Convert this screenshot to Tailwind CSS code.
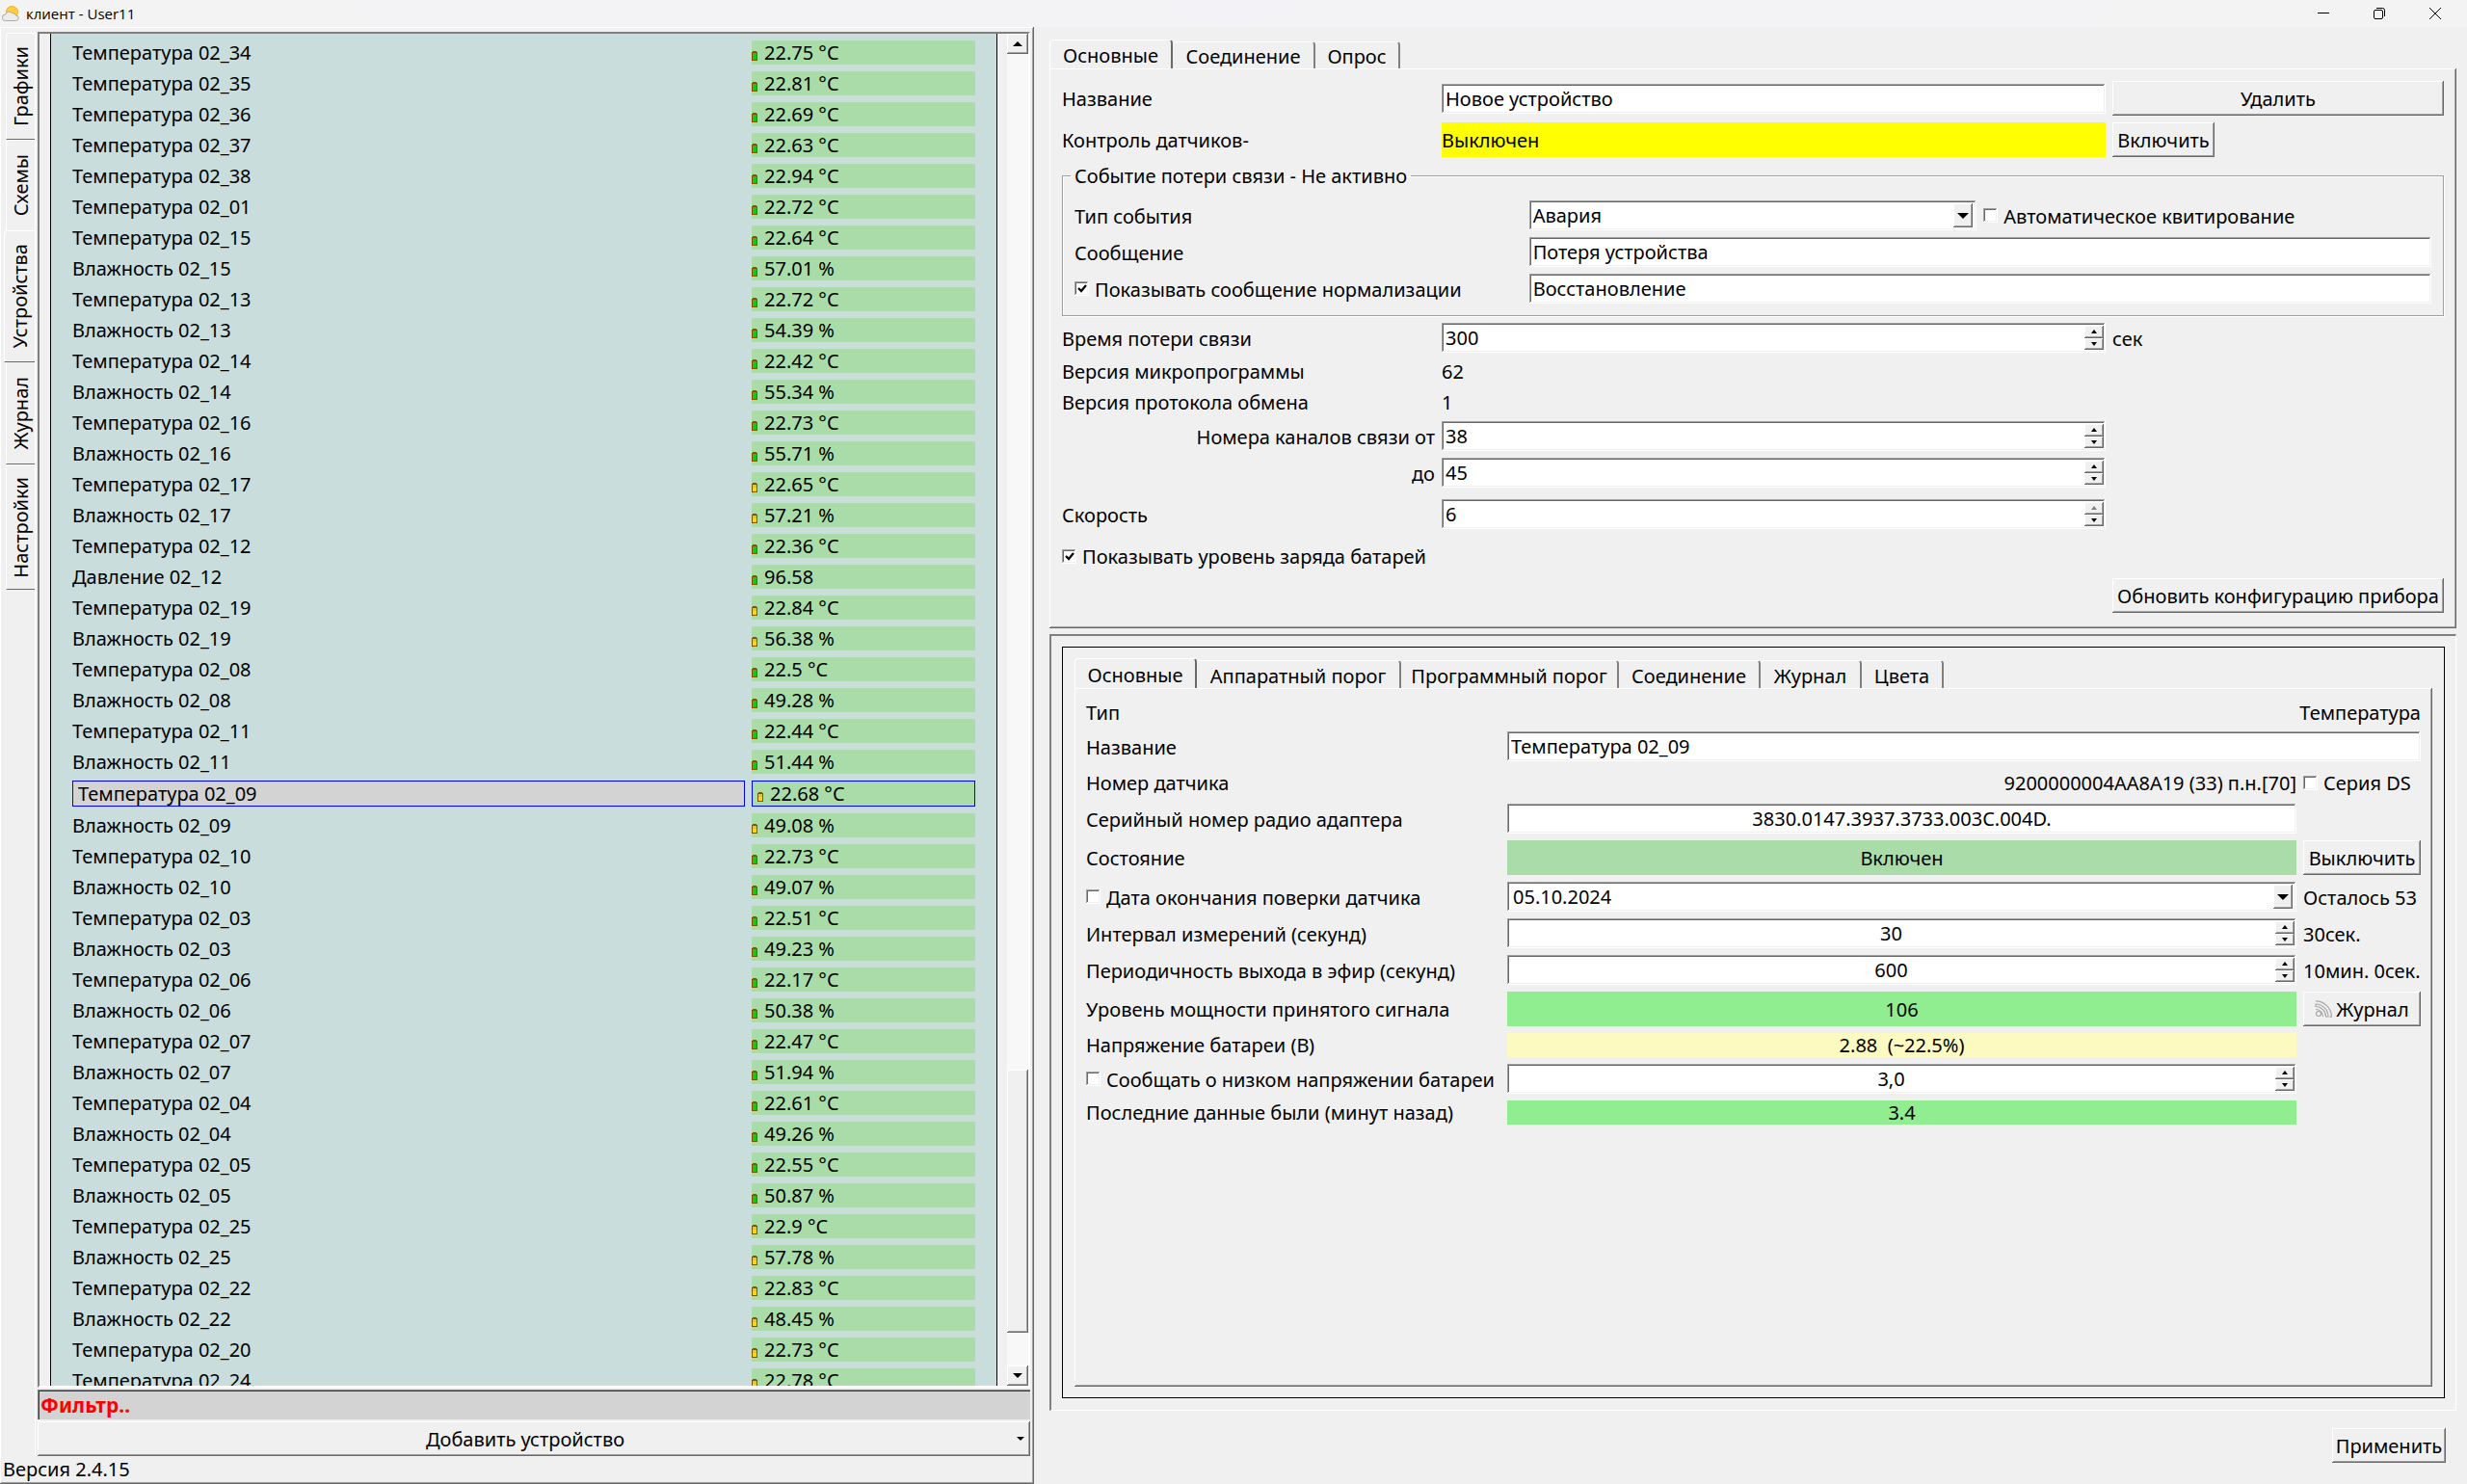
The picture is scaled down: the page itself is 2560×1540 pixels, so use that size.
<!DOCTYPE html>
<html lang="ru">
<head>
<meta charset="utf-8">
<title>клиент - User11</title>
<script src="https://cdn.jsdelivr.net/npm/@tailwindcss/browser@4"></script>
</head>
<body class="flex h-screen flex-col overflow-hidden bg-[#f0f0f0] font-['Noto_Sans','Open_Sans',sans-serif] text-[20px] leading-[25px] text-black [&_.raised]:shadow-[inset_-1px_-1px_0_#696969,inset_1px_1px_0_#fff,inset_-2px_-2px_0_#a0a0a0] [&_.sunken]:bg-white [&_.sunken]:shadow-[inset_-1px_-1px_0_#fff,inset_1px_1px_0_#a0a0a0,inset_-2px_-2px_0_#f0f0f0,inset_2px_2px_0_#696969]">
<svg class="hidden">
  <symbol id="up" viewBox="0 0 10 10"><path d="M5 3L8 7H2z"/></symbol>
  <symbol id="down" viewBox="0 0 10 10"><path d="M2 3H8L5 7z"/></symbol>
  <symbol id="drop" viewBox="0 0 12 12"><path d="M0 3H12L6 9z"/></symbol>
  <symbol id="scrollup" viewBox="0 0 10 6"><path d="M5 0L10 5H0z"/></symbol>
  <symbol id="scrolldown" viewBox="0 0 10 6"><path d="M0 0H10L5 5z"/></symbol>
  <symbol id="tick" viewBox="0 0 15 15"><path d="M4 7l3 3 5-6" fill="none" stroke="#000" stroke-width="2.200"/></symbol>
</svg>

<header class="flex h-7 shrink-0 items-center bg-[#f3f3f3] bg-linear-to-r from-[#f3f3f3] via-[#f3f2f6] to-[#f3f3f3]">
  <svg class="ml-[2px] size-[18px]" viewBox="0 0 18 18">
    <circle cx="10.500" cy="7.500" r="6" fill="#ffd23c" stroke="#f0a62c"/>
    <path d="M3.500 16.500a3.200 3.200 0 0 1 0-6.400 4.200 4.200 0 0 1 7-1.600 3.600 3.600 0 0 1 4 2.600 2.700 2.700 0 0 1 0 5.400z" fill="#ececec" stroke="#a9a29c" stroke-width=".9"/>
  </svg>
  <h1 class="ml-[7px] flex-1 font-['Open_Sans','Noto_Sans',sans-serif] text-[15px] leading-5">клиент - User11</h1>
  <button class="flex h-full w-[58px] items-center justify-center" aria-label="Свернуть"><svg class="size-3" viewBox="0 0 12 12" stroke="#000"><path d="M0 5.500H12"/></svg></button>
  <button class="flex h-full w-[58px] items-center justify-center" aria-label="Восстановить"><svg class="size-3" viewBox="0 0 12 12" fill="none" stroke="#000"><rect x=".5" y="2.500" width="9" height="9" rx="1.500"/><path d="M3 .5H9.500a2 2 0 0 1 2 2V9"/></svg></button>
  <button class="mr-1 flex h-full w-[58px] items-center justify-center" aria-label="Закрыть"><svg class="size-3" viewBox="0 0 12 12" stroke="#000"><path d="M0 0L12 12M12 0L0 12"/></svg></button>
</header>

<main class="grid min-h-0 flex-1 grid-cols-[1073fr_1487fr]">
  <section class="raised flex min-h-0 flex-col pt-[5px] pr-1 pb-[2px]">
    <div class="flex min-h-0 flex-1">
      <nav class="flex w-[37px] shrink-0 flex-col items-end border-r border-white pl-1 pt-px">
        <button class="flex h-[111px] w-[30px] items-center justify-center rounded-tl-sm border-b border-l border-t border-b-[#696969] border-l-white border-t-white"><span class="rotate-180 [writing-mode:vertical-rl]">Графики</span></button>
        <button class="flex h-[94px] w-[30px] items-center justify-center rounded-tl-sm border-l border-t border-white"><span class="rotate-180 [writing-mode:vertical-rl]">Схемы</span></button>
        <button class="flex h-[137px] w-8 items-center justify-center rounded-tl-sm border-b border-l border-t border-b-[#696969] border-l-white border-t-white"><span class="rotate-180 [writing-mode:vertical-rl]">Устройства</span></button>
        <button class="flex h-[106px] w-[30px] items-center justify-center border-b border-l border-b-[#696969] border-l-white"><span class="rotate-180 [writing-mode:vertical-rl]">Журнал</span></button>
        <button class="flex h-[130px] w-[30px] items-center justify-center rounded-tl-sm border-b border-l border-t border-b-[#696969] border-l-white border-t-white"><span class="rotate-180 [writing-mode:vertical-rl]">Настройки</span></button>
      </nav>

      <div class="flex min-h-0 min-w-0 flex-1 flex-col pl-[2px]">
        <div class="flex min-h-0 flex-1 border-2 border-b-[#fff] border-l-[#808080] border-r-[#fff] border-t-[#808080] pl-[11px]">
          <div class="min-w-0 flex-1 overflow-hidden border-x border-black bg-[#c9dddc] px-[15px]">
            <table class="w-full table-fixed border-separate border-spacing-[7px]">
              <colgroup><col><col class="w-[232px]"></colgroup>
              <tbody id="sensors"></tbody>
            </table>
          </div>
          <div class="ml-[10px] flex w-[22px] shrink-0 flex-col bg-[#f8f8f8]" role="scrollbar" aria-label="Прокрутка списка" aria-controls="sensors" aria-valuenow="90">
            <button class="raised flex h-[21px] items-center justify-center bg-[#f0f0f0]" aria-label="Вверх"><svg class="h-[6px] w-[10px]"><use href="#scrollup"/></svg></button>
            <div class="flex-[1054]"></div>
            <div class="raised flex-[273] bg-[#f0f0f0]"></div>
            <div class="flex-[34]"></div>
            <button class="raised flex h-[21px] items-center justify-center bg-[#f0f0f0]" aria-label="Вниз"><svg class="h-[6px] w-[10px]"><use href="#scrolldown"/></svg></button>
          </div>
        </div>
        <input type="text" placeholder="Фильтр.." aria-label="Фильтр" class="mt-[2px] h-[31px] w-full bg-[#d3d3d3] px-[3px] text-[21px] font-bold shadow-[inset_1px_1px_0_#808080,inset_2px_2px_0_#404040] outline-none placeholder:text-[#ff0000]">
        <button class="raised mt-[2px] flex h-9 items-center pr-[6px] pt-px"><span class="flex-1 pr-1">Добавить устройство</span><svg class="h-[5px] w-2" viewBox="0 0 10 6"><use href="#scrolldown"/></svg></button>
      </div>
    </div>
    <p class="h-[27px] pl-[3px] leading-[28px]">Версия 2.4.15</p>
  </section>

  <section class="flex min-h-0 flex-col pb-[22px] pl-4 pr-[11px] pt-[13px]">
    <div class="flex items-end" role="tablist">
      <button role="tab" aria-selected="true" class="flex h-[30px] w-[128px] items-center justify-center rounded-t-sm border-l border-r-2 border-t border-l-white border-r-[#696969] border-t-white pt-0.5">Основные</button>
      <button role="tab" class="flex h-7 w-[148px] items-center justify-center rounded-t-sm border-r-2 border-t border-r-[#808080] border-t-white pt-0.5">Соединение</button>
      <button role="tab" class="flex h-7 w-[88px] items-center justify-center rounded-t-sm border-r-2 border-t border-r-[#808080] border-t-white pt-0.5">Опрос</button>
    </div>
    <div class="raised px-[13px] pb-4 pt-[13px]">
      <div class="grid grid-cols-[387px_1fr_344px] items-center gap-[7px]">
        <label for="dev-name" class="pt-px">Название</label>
        <input id="dev-name" type="text" value="Новое устройство" class="sunken h-[31px] w-full px-1">
        <button class="raised h-9 pt-px">Удалить</button>

        <span class="pt-px">Контроль датчиков-</span>
        <output class="flex h-9 items-center bg-[#ff0] pt-px">Выключен</output>
        <button class="raised h-9 w-[106px] pt-px">Включить</button>

        <fieldset class="col-span-3 grid grid-cols-3 items-center gap-[7px] border border-[#a0a0a0] px-3 pb-3 pt-[13px] shadow-[1px_1px_0_#fff,inset_1px_1px_0_#fff]">
          <legend class="ml-[-4px] px-1">Событие потери связи - Не активно</legend>
          <label for="event-type" class="pt-px">Тип события</label>
          <div class="sunken flex h-[31px] items-center pr-1">
            <select id="event-type" class="h-full min-w-0 flex-1 appearance-none px-1"><option>Авария</option></select>
            <span class="raised flex h-[25px] w-5 items-center justify-center bg-[#f0f0f0]"><svg class="size-3"><use href="#drop"/></svg></span>
          </div>
          <label class="flex items-center gap-[6px]"><input type="checkbox" class="sunken size-[15px] appearance-none"><span class="pt-px">Автоматическое квитирование</span></label>
          <label for="loss-msg" class="pt-px">Сообщение</label>
          <input id="loss-msg" type="text" value="Потеря устройства" class="sunken col-span-2 h-[31px] w-full px-1">
          <label class="flex items-center gap-[6px]"><span class="grid"><input type="checkbox" checked class="sunken peer col-start-1 row-start-1 size-[15px] appearance-none"><svg class="pointer-events-none invisible col-start-1 row-start-1 size-[15px] peer-checked:visible"><use href="#tick"/></svg></span><span class="pt-px">Показывать сообщение нормализации</span></label>
          <input type="text" aria-label="Сообщение нормализации" value="Восстановление" class="sunken col-span-2 h-[31px] w-full px-1">
        </fieldset>

        <label for="loss-time" class="pt-px">Время потери связи</label>
        <div class="sunken flex h-[31px] pr-[2px]"><input id="loss-time" type="text" value="300" class="min-w-0 flex-1 px-1"><span class="my-[3px] flex w-5 flex-col"><button class="raised flex flex-1 items-center justify-center bg-[#f0f0f0]" aria-label="Больше"><svg class="size-[10px]"><use href="#up"/></svg></button><button class="raised flex flex-1 items-center justify-center bg-[#f0f0f0]" aria-label="Меньше"><svg class="size-[10px]"><use href="#down"/></svg></button></span></div>
        <span class="pt-px">сек</span>

        <span>Версия микропрограммы</span><span class="col-span-2">62</span>
        <span>Версия протокола обмена</span><span class="col-span-2">1</span>

        <label for="ch-from" class="pt-px text-right">Номера каналов связи от</label>
        <div class="sunken flex h-[31px] pr-[2px]"><input id="ch-from" type="text" value="38" class="min-w-0 flex-1 px-1"><span class="my-[3px] flex w-5 flex-col"><button class="raised flex flex-1 items-center justify-center bg-[#f0f0f0]" aria-label="Больше"><svg class="size-[10px]"><use href="#up"/></svg></button><button class="raised flex flex-1 items-center justify-center bg-[#f0f0f0]" aria-label="Меньше"><svg class="size-[10px]"><use href="#down"/></svg></button></span></div>
        <span></span>

        <label for="ch-to" class="pt-px text-right">до</label>
        <div class="sunken flex h-[31px] pr-[2px]"><input id="ch-to" type="text" value="45" class="min-w-0 flex-1 px-1"><span class="my-[3px] flex w-5 flex-col"><button class="raised flex flex-1 items-center justify-center bg-[#f0f0f0]" aria-label="Больше"><svg class="size-[10px]"><use href="#up"/></svg></button><button class="raised flex flex-1 items-center justify-center bg-[#f0f0f0]" aria-label="Меньше"><svg class="size-[10px]"><use href="#down"/></svg></button></span></div>
        <span></span>

        <label for="speed" class="pt-px">Скорость</label>
        <div class="sunken my-[5px] flex h-[31px] pr-[2px]"><input id="speed" type="text" value="6" class="min-w-0 flex-1 px-1"><span class="my-[3px] flex w-5 flex-col"><button class="raised flex flex-1 items-center justify-center bg-[#f0f0f0]" aria-label="Больше" disabled><svg class="size-[10px] fill-[#808080]"><use href="#up"/></svg></button><button class="raised flex flex-1 items-center justify-center bg-[#f0f0f0]" aria-label="Меньше"><svg class="size-[10px]"><use href="#down"/></svg></button></span></div>
        <span></span>

        <label class="col-span-3 flex h-8 items-center gap-[6px]"><span class="grid"><input type="checkbox" checked class="sunken peer col-start-1 row-start-1 size-[15px] appearance-none"><svg class="pointer-events-none invisible col-start-1 row-start-1 size-[15px] peer-checked:visible"><use href="#tick"/></svg></span><span class="pt-px">Показывать уровень заряда батарей</span></label>

        <button class="raised col-start-3 h-9 pt-px">Обновить конфигурацию прибора</button>
      </div>
    </div>

    <div class="mt-[6px] flex min-h-0 flex-1 flex-col border-l-2 border-t-2 border-l-[#808080] border-t-[#808080] border-b border-r border-b-white border-r-white px-[11px] pb-3 pt-[11px]">
      <div class="flex flex-1 flex-col border border-black px-3 pb-[11px] pt-[11px]">
        <div class="flex items-end" role="tablist">
          <button role="tab" aria-selected="true" class="flex h-[31px] w-[127px] items-center justify-center rounded-t-sm border-l border-r-2 border-t border-l-white border-r-[#696969] border-t-white pt-0.5">Основные</button>
          <button role="tab" class="flex h-[29px] w-[212px] items-center justify-center rounded-t-sm border-r-2 border-t border-r-[#808080] border-t-white pt-0.5">Аппаратный порог</button>
          <button role="tab" class="flex h-[29px] w-[226px] items-center justify-center rounded-t-sm border-r-2 border-t border-r-[#808080] border-t-white pt-0.5">Программный порог</button>
          <button role="tab" class="flex h-[29px] w-[147px] items-center justify-center rounded-t-sm border-r-2 border-t border-r-[#808080] border-t-white pt-0.5">Соединение</button>
          <button role="tab" class="flex h-[29px] w-[105px] items-center justify-center rounded-t-sm border-r-2 border-t border-r-[#808080] border-t-white pt-0.5">Журнал</button>
          <button role="tab" class="flex h-[29px] w-[85px] items-center justify-center rounded-t-sm border-r-2 border-t border-r-[#808080] border-t-white pt-0.5">Цвета</button>
        </div>
        <div class="raised flex-1 px-3 pt-[13px]">
          <div class="grid grid-cols-[430px_1fr_122px] items-center gap-[7px]">
            <span>Тип</span><output class="col-span-2 text-right">Температура</output>

            <label for="sen-name" class="pt-px">Название</label>
            <input id="sen-name" type="text" value="Температура 02_09" class="sunken col-span-2 h-[31px] w-full px-1">

            <span class="pt-px">Номер датчика</span>
            <output class="text-right">9200000004AA8A19 (33) п.н.[70]</output>
            <label class="flex h-[30px] items-center gap-[6px]"><input type="checkbox" class="sunken size-[15px] appearance-none"><span class="pt-px">Серия DS</span></label>

            <label for="serial" class="pt-px">Серийный номер радио адаптера</label>
            <input id="serial" type="text" value="3830.0147.3937.3733.003C.004D." class="sunken h-[31px] w-full px-1 text-center">
            <span></span>

            <span class="pt-px">Состояние</span>
            <output class="flex h-9 items-center justify-center bg-[#aadcaa] pt-px">Включен</output>
            <button class="raised h-9 pt-px">Выключить</button>

            <label class="flex items-center gap-[6px]"><input type="checkbox" class="sunken size-[15px] appearance-none"><span class="pt-px">Дата окончания поверки датчика</span></label>
            <div class="sunken flex h-[31px] items-center pr-1"><select aria-label="Дата окончания поверки" class="h-full min-w-0 flex-1 appearance-none px-[6px]"><option>05.10.2024</option></select><span class="raised flex h-[25px] w-5 items-center justify-center bg-[#f0f0f0]"><svg class="size-3"><use href="#drop"/></svg></span></div>
            <span class="pt-px">Осталось 53</span>

            <label for="interval" class="pt-px">Интервал измерений (секунд)</label>
            <div class="sunken flex h-[31px] pr-[2px]"><input id="interval" type="text" value="30" class="min-w-0 flex-1 px-1 text-center"><span class="my-[3px] flex w-5 flex-col"><button class="raised flex flex-1 items-center justify-center bg-[#f0f0f0]" aria-label="Больше"><svg class="size-[10px]"><use href="#up"/></svg></button><button class="raised flex flex-1 items-center justify-center bg-[#f0f0f0]" aria-label="Меньше"><svg class="size-[10px]"><use href="#down"/></svg></button></span></div>
            <span class="pt-px">30сек.</span>

            <label for="period" class="pt-px">Периодичность выхода в эфир (секунд)</label>
            <div class="sunken flex h-[31px] pr-[2px]"><input id="period" type="text" value="600" class="min-w-0 flex-1 px-1 text-center"><span class="my-[3px] flex w-5 flex-col"><button class="raised flex flex-1 items-center justify-center bg-[#f0f0f0]" aria-label="Больше"><svg class="size-[10px]"><use href="#up"/></svg></button><button class="raised flex flex-1 items-center justify-center bg-[#f0f0f0]" aria-label="Меньше"><svg class="size-[10px]"><use href="#down"/></svg></button></span></div>
            <span class="whitespace-nowrap pt-px">10мин. 0сек.</span>

            <span class="pt-px">Уровень мощности принятого сигнала</span>
            <output class="flex h-9 items-center justify-center bg-[#90ee90] pt-px">106</output>
            <button class="raised flex h-9 items-center justify-center gap-1"><svg class="size-[18px]" viewBox="0 0 18 18" fill="none" stroke="#a8a8a8" stroke-width="1.200"><circle cx="4" cy="14" r="2.500"/><path d="M1 6.500a10.500 10.500 0 0 1 10.500 10.500h2.500A13 13 0 0 0 1 4z"/><path d="M1 .8A16.500 16.500 0 0 1 17.400 17.200h-2"/><path d="M1 9.500a7.500 7.500 0 0 1 7.500 7.500"/></svg><span class="pt-px">Журнал</span></button>

            <span>Напряжение батареи (В)</span>
            <output class="whitespace-pre bg-[#fcfac0] text-center">2.88  (~22.5%)</output>
            <span></span>

            <label class="flex items-center gap-[6px] whitespace-nowrap"><input type="checkbox" class="sunken size-[15px] appearance-none"><span class="pt-px">Сообщать о низком напряжении батареи</span></label>
            <div class="sunken flex h-[31px] pr-[2px]"><input type="text" aria-label="Порог напряжения" value="3,0" class="min-w-0 flex-1 px-1 text-center"><span class="my-[3px] flex w-5 flex-col"><button class="raised flex flex-1 items-center justify-center bg-[#f0f0f0]" aria-label="Больше"><svg class="size-[10px]"><use href="#up"/></svg></button><button class="raised flex flex-1 items-center justify-center bg-[#f0f0f0]" aria-label="Меньше"><svg class="size-[10px]"><use href="#down"/></svg></button></span></div>
            <span></span>

            <span>Последние данные были (минут назад)</span>
            <output class="bg-[#90ee90] text-center">3.4</output>
            <span></span>
          </div>
        </div>
      </div>
    </div>
    <button class="raised mr-[11px] mt-[18px] h-9 w-[118px] self-end pt-px">Применить</button>
  </section>
</main>

<script>
const T = 'Температура', H = 'Влажность', P = 'Давление';
// kind, sensor number, value, battery level (g = full, y = low)
const rows = [
  [T,'34','22.75','g'],[T,'35','22.81','g'],[T,'36','22.69','g'],[T,'37','22.63','g'],[T,'38','22.94','g'],
  [T,'01','22.72','g'],[T,'15','22.64','g'],[H,'15','57.01','g'],[T,'13','22.72','g'],[H,'13','54.39','g'],
  [T,'14','22.42','g'],[H,'14','55.34','g'],[T,'16','22.73','g'],[H,'16','55.71','g'],[T,'17','22.65','y'],
  [H,'17','57.21','y'],[T,'12','22.36','g'],[P,'12','96.58','g'],[T,'19','22.84','y'],[H,'19','56.38','y'],
  [T,'08','22.5','g'],[H,'08','49.28','g'],[T,'11','22.44','g'],[H,'11','51.44','g'],[T,'09','22.68','y',true],
  [H,'09','49.08','y'],[T,'10','22.73','g'],[H,'10','49.07','g'],[T,'03','22.51','g'],[H,'03','49.23','g'],
  [T,'06','22.17','g'],[H,'06','50.38','g'],[T,'07','22.47','g'],[H,'07','51.94','g'],[T,'04','22.61','g'],
  [H,'04','49.26','g'],[T,'05','22.55','g'],[H,'05','50.87','g'],[T,'25','22.9','y'],[H,'25','57.78','y'],
  [T,'22','22.83','y'],[H,'22','48.45','y'],[T,'20','22.73','y'],[T,'24','22.78','y'],
];
const unit = { [T]: ' °C', [H]: ' %', [P]: '' };
const battery = level => `<svg class="mt-[10px] h-[12px] w-[6px] shrink-0" viewBox="0 0 6 12">
  <path d="M1 1h4v1h1v9H0V2h1z" fill="#805500"/>
  ${level === 'g' ? '<path d="M1 3h4v7H1z" fill="#14c814"/>' : '<path d="M1 3h4v7H1z" fill="#d2c850"/><path d="M1 6h4v4H1z" fill="#ffd700"/>'}</svg>`;
document.getElementById('sensors').innerHTML = rows.map(([kind, no, value, level, selected]) => `
  <tr>
    <td class="${selected ? 'border border-[#0000ff] bg-[#d3d3d3] px-[5px] py-0' : 'p-0'}">${kind} 02_${no}</td>
    <td class="bg-[#aadcaa] ${selected ? 'border border-[#0000ff] px-[5px] py-0' : 'p-0'}"><div class="flex h-[25px] gap-[7px]">${battery(level)}<span>${value}${unit[kind]}</span></div></td>
  </tr>`).join('');
</script>
</body>
</html>
